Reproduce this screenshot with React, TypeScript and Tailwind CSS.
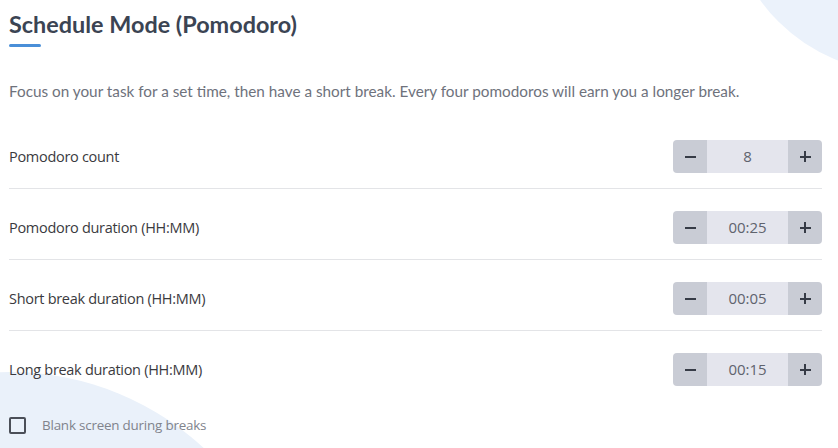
import React from "react";

const rows = [
  { label: "Pomodoro count", value: "8" },
  { label: "Pomodoro duration (HH:MM)", value: "00:25" },
  { label: "Short break duration (HH:MM)", value: "00:05" },
  { label: "Long break duration (HH:MM)", value: "00:15" },
];

const Stepper = ({ value }: { value: string }) => {
  return (
    <div className="flex h-[33px] w-[149px] overflow-hidden rounded-[4px]">
      <button className="flex w-[34px] items-center justify-center bg-[#c9ccd5]">
        <span className="block h-[2px] w-[11px] bg-[#363b46]" />
      </button>
      <div className="flex flex-1 items-center justify-center bg-[#e4e5ed] text-[15px] text-[#5f636d]">
        {value}
      </div>
      <button className="relative flex w-[34px] items-center justify-center bg-[#c9ccd5]">
        <span className="block h-[2px] w-[11px] bg-[#363b46]" />
        <span className="absolute block h-[11px] w-[2px] bg-[#363b46]" />
      </button>
    </div>
  );
};

const App = () => {
  return (
    <div className="relative h-[448px] w-[838px] overflow-hidden bg-white font-['Open_Sans',sans-serif]">
      {/* background blobs */}
      <div className="absolute left-[728px] top-[-272px] h-[344px] w-[344px] rounded-full bg-[#ebf2fb]" />
      <div className="absolute left-[-275px] top-[372px] h-[570px] w-[570px] rounded-full bg-[#eaf1fa]" />

      <div className="relative pl-[9px] pr-[16px] pt-[8px]">
        <h1 className="font-['Lato',sans-serif] text-[23.4px] font-bold leading-[32px] text-[#3b4453]">
          Schedule Mode (Pomodoro)
        </h1>
        <div className="mt-[4px] h-[3px] w-[32px] rounded-full bg-[#4a8fd8]" />

        <p className="mt-[33px] font-['Lato',sans-serif] text-[15.3px] leading-[22px] text-[#6e727c]">
          Focus on your task for a set time, then have a short break. Every four pomodoros will earn you a longer break.
        </p>

        <div className="mt-[16px]">
          {rows.map((r, i) => (
            <div
              key={r.label}
              className={
                i < rows.length - 1
                  ? "flex items-center justify-between border-b border-[#e3e4e7] pb-[15px] pt-[22px]"
                  : "flex items-center justify-between pb-[15px] pt-[22px]"
              }
            >
              <span className="text-[14.5px] tracking-[-0.3px] text-[#3a3a3e]">{r.label}</span>
              <Stepper value={r.value} />
            </div>
          ))}
        </div>

        <label className="mt-[14px] flex items-center gap-[16px]">
          <span className="block h-[17px] w-[17px] rounded-[2px] border-2 border-[#4b4f58]" />
          <span className="text-[13.4px] tracking-[-0.2px] text-[#80838c]">Blank screen during breaks</span>
        </label>
      </div>
    </div>
  );
};

export default App;
